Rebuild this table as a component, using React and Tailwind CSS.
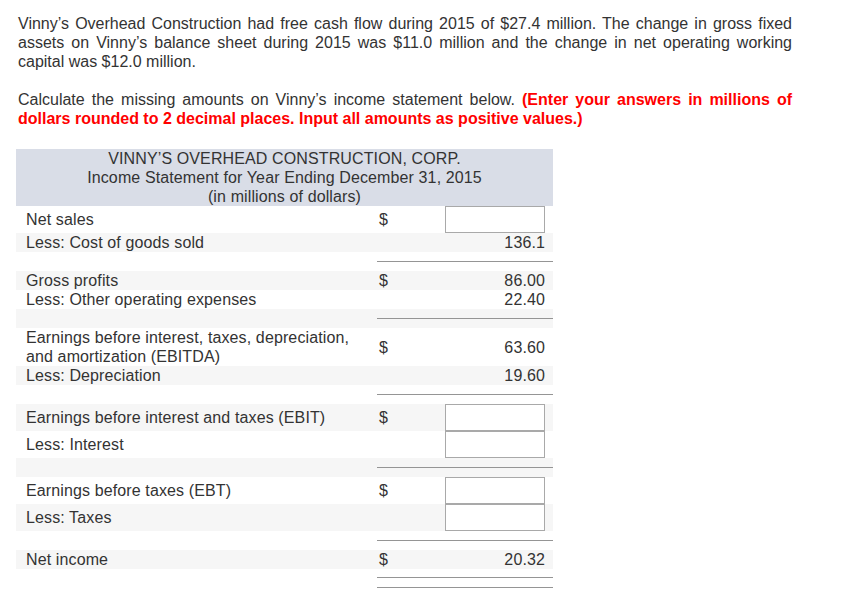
import React from "react";

const font = { fontFamily: '"Liberation Sans", Arial, sans-serif' };

function Box() {
  return (
    <input
      type="text"
      className="block ml-auto w-[100px] h-[27px] border border-[#a9a9a9] bg-white outline-none"
    />
  );
}

function Row({ label, dollar, value, input, gray }) {
  return (
    <tr className={gray ? "bg-[#f6f6f6]" : "bg-white"}>
      <td className={"pl-[10px] pr-2 align-middle " + (input ? "h-[27px]" : "h-[19px]")}>{label}</td>
      <td className="pl-[2px] align-middle">{dollar ? "$" : ""}</td>
      <td className="pr-2 text-right align-middle">{input ? <Box /> : value}</td>
    </tr>
  );
}

function Spacer({ gray }) {
  return (
    <tr className={gray ? "bg-[#f6f6f6]" : "bg-white"}>
      <td className="h-[19px]"></td>
      <td colSpan={2} className="align-middle">
        <div className="h-px bg-[#959595]"></div>
      </td>
    </tr>
  );
}

export default function App() {
  return (
    <div className="bg-white w-[865px] h-[603px] text-[16px] leading-[19px] text-[#333]" style={font}>
      <div className="pl-[18px] pt-[14px] w-[792px] text-justify">
        <p>
          Vinny’s Overhead Construction had free cash flow during 2015 of $27.4 million. The change in gross fixed
          assets on Vinny’s balance sheet during 2015 was $11.0 million and the change in net operating working
          capital was $12.0 million.
        </p>
        <p className="mt-[19px]">
          Calculate the missing amounts on Vinny’s income statement below.{" "}
          <strong className="font-bold text-[#ff0000]">
            (Enter your answers in millions of dollars rounded to 2 decimal places. Input all amounts as positive
            values.)
          </strong>
        </p>
      </div>
      <table className="ml-4 mt-[21px] w-[537px] table-fixed border-collapse tracking-[0.12px]">
        <colgroup>
          <col className="w-[361px]" />
          <col className="w-[68px]" />
          <col className="w-[108px]" />
        </colgroup>
        <tbody>
          <tr className="bg-[#d9dde7]">
            <td colSpan={3} className="text-center">
              VINNY’S OVERHEAD CONSTRUCTION, CORP.
              <br />
              Income Statement for Year Ending December 31, 2015
              <br />
              (in millions of dollars)
            </td>
          </tr>
          <Row label="Net sales" dollar input />
          <Row label="Less: Cost of goods sold" value="136.1" gray />
          <Spacer />
          <Row label="Gross profits" dollar value="86.00" gray />
          <Row label="Less: Other operating expenses" value="22.40" />
          <Spacer gray />
          <Row label="Earnings before interest, taxes, depreciation, and amortization (EBITDA)" dollar value="63.60" />
          <Row label="Less: Depreciation" value="19.60" gray />
          <Spacer />
          <Row label="Earnings before interest and taxes (EBIT)" dollar input gray />
          <Row label="Less: Interest" input />
          <Spacer gray />
          <Row label="Earnings before taxes (EBT)" dollar input />
          <Row label="Less: Taxes" input gray />
          <Spacer />
          <Row label="Net income" dollar value="20.32" gray />
          <tr>
            <td></td>
            <td colSpan={2}>
              <div className="mt-2 h-[11px] border-t border-b border-[#959595]"></div>
            </td>
          </tr>
        </tbody>
      </table>
    </div>
  );
}
